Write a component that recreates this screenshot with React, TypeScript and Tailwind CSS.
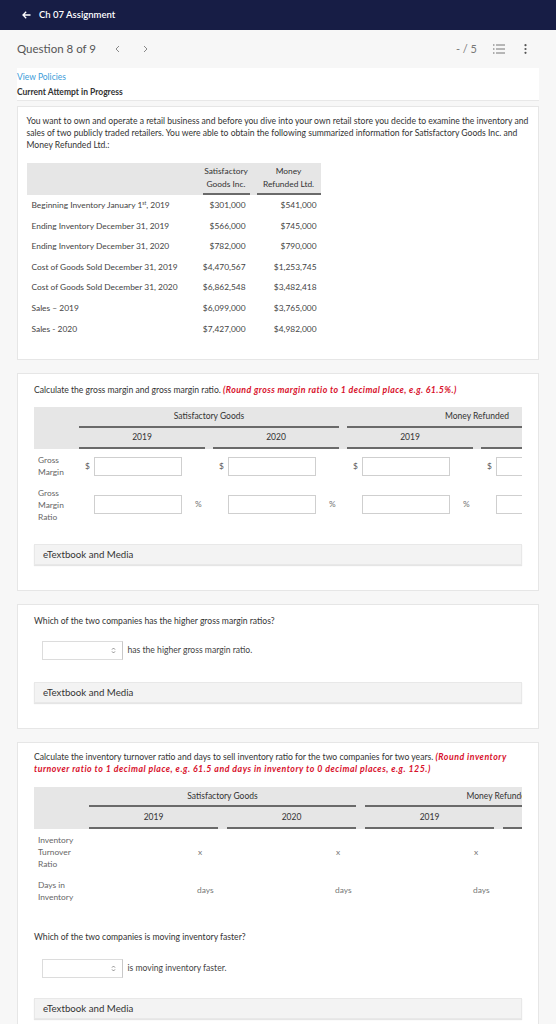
import React from "react";

function ChevronLeft() {
  return (
    <svg width="5" height="8" viewBox="0 0 5 8" fill="none">
      <path d="M4 1 L1 4 L4 7" stroke="#888" strokeWidth="1" />
    </svg>
  );
}
function ChevronRight() {
  return (
    <svg width="5" height="8" viewBox="0 0 5 8" fill="none">
      <path d="M1 1 L4 4 L1 7" stroke="#888" strokeWidth="1" />
    </svg>
  );
}

function ListIcon() {
  return (
    <svg width="12" height="10" viewBox="0 0 12 10" fill="none">
      <circle cx="0.8" cy="1" r="0.8" fill="#777" />
      <circle cx="0.8" cy="5" r="0.8" fill="#777" />
      <circle cx="0.8" cy="9" r="0.8" fill="#777" />
      <path d="M3 1 H12 M3 5 H12 M3 9 H12" stroke="#777" strokeWidth="1" />
    </svg>
  );
}

function Kebab() {
  return (
    <svg width="3" height="10" viewBox="0 0 3 10">
      <circle cx="1.5" cy="1.2" r="1.1" fill="#555" />
      <circle cx="1.5" cy="5" r="1.1" fill="#555" />
      <circle cx="1.5" cy="8.8" r="1.1" fill="#555" />
    </svg>
  );
}

function ETextbook() {
  return (
    <div className="h-[21px] bg-[#f3f3f3] border border-[#e8e8e8] shadow-[0_1px_1px_rgba(0,0,0,0.10)] flex items-center pl-[8px] text-[9.7px] text-[#333]">
      eTextbook and Media
    </div>
  );
}

function SelectBox({ text }: { text: string }) {
  return (
    <div className="flex items-center ml-[7.5px]">
      <div className="w-[81px] h-[19px] bg-white border border-[#dcdcdc] border-r-[#c8c8c8] flex items-center justify-end pr-[6px]">
        <svg width="5" height="7" viewBox="0 0 5 7" fill="none">
          <path d="M1 2.6 L2.5 1 L4 2.6 M1 4.4 L2.5 6 L4 4.4" stroke="#777" strokeWidth="0.8" />
        </svg>
      </div>
      <span className="ml-[5px] text-[8.6px] text-[#444]">{text}</span>
    </div>
  );
}

const rows1: [React.ReactNode, string, string][] = [
  [
    <>
      Beginning Inventory January 1<sup className="text-[5px] leading-none">st</sup>, 2019
    </>,
    "$301,000",
    "$541,000",
  ],
  ["Ending Inventory December 31, 2019", "$566,000", "$745,000"],
  ["Ending Inventory December 31, 2020", "$782,000", "$790,000"],
  ["Cost of Goods Sold December 31, 2019", "$4,470,567", "$1,253,745"],
  ["Cost of Goods Sold December 31, 2020", "$6,862,548", "$3,482,418"],
  ["Sales – 2019", "$6,099,000", "$3,765,000"],
  ["Sales - 2020", "$7,427,000", "$4,982,000"],
];

function Card({ children, className = "" }: { children: React.ReactNode; className?: string }) {
  return <div className={"bg-white border border-[#e6e6e6] " + className}>{children}</div>;
}

function GMTable() {
  const cols = [0, 1, 2, 3];
  return (
    <div className="w-[488px] overflow-hidden">
      <div className="w-[573px]">
        <div className="bg-[#e6e6e6]">
          <div className="flex h-[21px]">
            <div className="w-[45px] shrink-0" />
            <div className="w-[260px] shrink-0 border-b-2 border-[#6a6a6a] flex items-center justify-center text-[8.5px] text-[#333]">
              Satisfactory Goods
            </div>
            <div className="w-[8px] shrink-0" />
            <div className="w-[260px] shrink-0 border-b-2 border-[#6a6a6a] flex items-center justify-center text-[8.5px] text-[#333]">
              Money Refunded
            </div>
          </div>
          <div className="flex h-[21px]">
            <div className="w-[45px] shrink-0" />
            {["2019", "2020", "2019", "2020"].map((y, i) => (
              <div key={i} className={"w-[126px] shrink-0 border-b-2 border-[#6a6a6a] flex items-center justify-center text-[8.5px] text-[#333] " + (i < 3 ? "mr-[8px]" : "")}>
                {y}
              </div>
            ))}
          </div>
        </div>
        <div className="flex h-[34px] items-center">
          <div className="w-[45px] shrink-0 pl-[4px] text-[8.4px] leading-[12px] text-[#666]">
            Gross
            <br />
            Margin
          </div>
          {cols.map((i) => (
            <div key={i} className={"w-[126px] shrink-0 flex items-center " + (i < 3 ? "mr-[8px]" : "")}>
              <span className="w-[15px] pl-[6px] text-[8.4px] text-[#555]">$</span>
              <div className="w-[88px] h-[19px] border border-[#cfcfcf] bg-white" />
            </div>
          ))}
        </div>
        <div className="flex h-[43px] items-center">
          <div className="w-[45px] shrink-0 pl-[4px] text-[8.4px] leading-[12px] text-[#666]">
            Gross
            <br />
            Margin
            <br />
            Ratio
          </div>
          {cols.map((i) => (
            <div key={i} className={"w-[126px] shrink-0 flex items-center " + (i < 3 ? "mr-[8px]" : "")}>
              <div className="w-[15px]" />
              <div className="w-[88px] h-[19px] border border-[#cfcfcf] bg-white" />
              <span className="ml-[13px] text-[8.4px] text-[#777]">%</span>
            </div>
          ))}
        </div>
      </div>
    </div>
  );
}

function ITTable() {
  const cols = [0, 1, 2, 3];
  return (
    <div className="w-[488px] overflow-hidden">
      <div className="w-[634px]">
        <div className="bg-[#e6e6e6]">
          <div className="flex h-[20px]">
            <div className="w-[55px] shrink-0" />
            <div className="w-[267px] shrink-0 border-b-2 border-[#6a6a6a] flex items-center justify-center text-[8.5px] text-[#333]">
              Satisfactory Goods
            </div>
            <div className="w-[9px] shrink-0" />
            <div className="w-[267px] shrink-0 border-b-2 border-[#6a6a6a] flex items-center justify-center text-[8.5px] text-[#333]">
              Money Refunded
            </div>
          </div>
          <div className="flex h-[22px]">
            <div className="w-[55px] shrink-0" />
            {["2019", "2020", "2019", "2020"].map((y, i) => (
              <div key={i} className={"w-[129px] shrink-0 border-b-2 border-[#6a6a6a] flex items-center justify-center text-[8.5px] text-[#333] " + (i < 3 ? "mr-[9px]" : "")}>
                {y}
              </div>
            ))}
          </div>
        </div>
        <div className="flex h-[46px] items-center">
          <div className="w-[55px] shrink-0 pl-[4px] text-[8.4px] leading-[12px] text-[#666]">
            Inventory
            <br />
            Turnover
            <br />
            Ratio
          </div>
          {cols.map((i) => (
            <div key={i} className={"w-[129px] shrink-0 pl-[109px] text-[8.4px] text-[#777] " + (i < 3 ? "mr-[9px]" : "")}>
              x
            </div>
          ))}
        </div>
        <div className="flex h-[31px] items-center">
          <div className="w-[55px] shrink-0 pl-[4px] text-[8.4px] leading-[12px] text-[#666]">
            Days in
            <br />
            Inventory
          </div>
          {cols.map((i) => (
            <div key={i} className={"w-[129px] shrink-0 pl-[108px] text-[8.4px] text-[#777] " + (i < 3 ? "mr-[9px]" : "")}>
              days
            </div>
          ))}
        </div>
      </div>
    </div>
  );
}

export default function App() {
  return (
    <div className="min-h-[1024px] bg-[#f7f7f7] font-['Lato',sans-serif] overflow-hidden">
      {/* header */}
      <div className="h-[30px] bg-[#171d45] flex items-center pl-[22px]">
        <svg width="9" height="8" viewBox="0 0 9 8" fill="none">
          <path d="M8.5 4 H1 M4.2 0.8 L1 4 L4.2 7.2" stroke="#fff" strokeWidth="1.3" />
        </svg>
        <span className="ml-[8px] text-[9.5px] font-semibold text-white">Ch 07 Assignment</span>
      </div>
      {/* question row */}
      <div className="h-[38px] flex items-center pl-[17px] pr-[29px]">
        <span className="text-[11.5px] text-[#555]">Question 8 of 9</span>
        <span className="ml-[19px] flex items-center">
          <ChevronLeft />
        </span>
        <span className="ml-[23px] flex items-center">
          <ChevronRight />
        </span>
        <div className="ml-auto flex items-center">
          <span className="text-[11px] text-[#777]">- / 5</span>
          <span className="ml-[16px] flex items-center">
            <ListIcon />
          </span>
          <span className="ml-[19px] flex items-center">
            <Kebab />
          </span>
        </div>
      </div>
      <div className="mx-[17px]">
        <div className="bg-white h-[33px] border-b border-[#e8e8e8] flex flex-col justify-center gap-[5px]">
          <div className="text-[8.5px] leading-[10px] text-[#3a9bd8]">View Policies</div>
          <div className="text-[8.5px] leading-[10px] font-bold text-[#333]">Current Attempt in Progress</div>
        </div>

        {/* card 1 */}
        <Card className="mt-[5px] pt-[8px] pb-[20px] pl-[8.5px] pr-[2px]">
          <p className="text-[8.6px] leading-[12px] text-[#333]">
            You want to own and operate a retail business and before you dive into your own retail store you decide to examine the inventory and sales of two publicly traded retailers. You were able to obtain the following summarized information for Satisfactory Goods Inc. and Money Refunded Ltd.:
          </p>
          <div className="mt-[12px] w-[294px]">
            <div className="flex bg-[#e6e6e6] h-[32px]">
              <div className="w-[176px]" />
              <div className="w-[47px] border-b-2 border-[#6a6a6a] flex items-center justify-center text-center text-[8.4px] leading-[13px] text-[#333]">
                Satisfactory
                <br />
                Goods Inc.
              </div>
              <div className="w-[64px] ml-[7px] border-b-2 border-[#6a6a6a] flex items-center justify-center text-center text-[8.4px] leading-[13px] text-[#333]">
                Money
                <br />
                Refunded Ltd.
              </div>
            </div>
            {rows1.map((r, i) => (
              <div key={i} className="flex h-[20.6px] items-center text-[8.4px] text-[#444] whitespace-nowrap">
                <div className="w-[176px] pl-[5px]">{r[0]}</div>
                <div className="w-[47px] text-right pr-[4px]">{r[1]}</div>
                <div className="w-[64px] ml-[7px] text-right pr-[4px]">{r[2]}</div>
              </div>
            ))}
          </div>
        </Card>

        {/* card 2 */}
        <Card className="mt-[13px] pt-[10px] pb-[25px] px-[16px]">
          <p className="text-[8.6px] leading-[12px] text-[#333]">
            Calculate the gross margin and gross margin ratio.{" "}
            <span className="font-bold italic text-[8.8px] tracking-[0.4px] text-[#d8102b]">(Round gross margin ratio to 1 decimal place, e.g. 61.5%.)</span>
          </p>
          <div className="mt-[11px]">
            <GMTable />
          </div>
          <div className="mt-[18px]">
            <ETextbook />
          </div>
        </Card>

        {/* card 3 */}
        <Card className="mt-[13px] pt-[10px] pb-[25px] px-[16px]">
          <p className="text-[8.6px] leading-[12px] text-[#333]">Which of the two companies has the higher gross margin ratios?</p>
          <div className="mt-[14px]">
            <SelectBox text="has the higher gross margin ratio." />
          </div>
          <div className="mt-[22px]">
            <ETextbook />
          </div>
        </Card>

        {/* card 4 */}
        <Card className="mt-[13px] pt-[8px] pb-[26px] px-[16px]">
          <p className="text-[8.6px] leading-[12px] text-[#333]">
            Calculate the inventory turnover ratio and days to sell inventory ratio for the two companies for two years.{" "}
            <span className="font-bold italic text-[8.8px] tracking-[0.5px] text-[#d8102b]">
              (Round inventory turnover ratio to 1 decimal place, e.g. 61.5 and days in inventory to 0 decimal places, e.g. 125.)
            </span>
          </p>
          <div className="mt-[12px]">
            <ITTable />
          </div>
          <p className="mt-[25px] text-[8.6px] leading-[12px] text-[#333]">Which of the two companies is moving inventory faster?</p>
          <div className="mt-[16px]">
            <SelectBox text="is moving inventory faster." />
          </div>
          <div className="mt-[20px]">
            <ETextbook />
          </div>
        </Card>
      </div>
    </div>
  );
}
